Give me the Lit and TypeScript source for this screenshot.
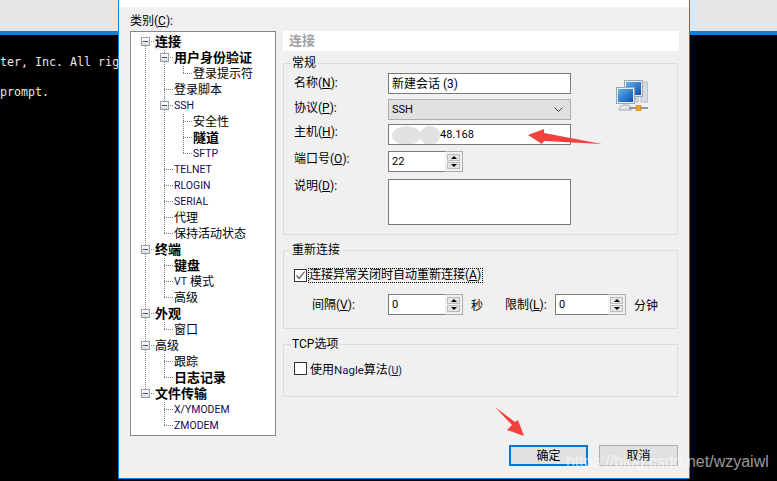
import { LitElement, html, css, svg } from "lit";
import { customElement } from "lit/decorators.js";

type Row = { t: string; lvl: number; bold?: boolean; exp?: boolean; sel?: boolean };
const rows: Row[] = [
  { t: "连接", lvl: 0, bold: true, exp: true, sel: true },
  { t: "用户身份验证", lvl: 1, bold: true, exp: true },
  { t: "登录提示符", lvl: 2 },
  { t: "登录脚本", lvl: 1 },
  { t: "SSH", lvl: 1, exp: true },
  { t: "安全性", lvl: 2 },
  { t: "隧道", lvl: 2, bold: true },
  { t: "SFTP", lvl: 2 },
  { t: "TELNET", lvl: 1 },
  { t: "RLOGIN", lvl: 1 },
  { t: "SERIAL", lvl: 1 },
  { t: "代理", lvl: 1 },
  { t: "保持活动状态", lvl: 1 },
  { t: "终端", lvl: 0, bold: true, exp: true },
  { t: "键盘", lvl: 1, bold: true },
  { t: "VT 模式", lvl: 1 },
  { t: "高级", lvl: 1 },
  { t: "外观", lvl: 0, bold: true, exp: true },
  { t: "窗口", lvl: 1 },
  { t: "高级", lvl: 0, exp: true },
  { t: "跟踪", lvl: 1 },
  { t: "日志记录", lvl: 1, bold: true },
  { t: "文件传输", lvl: 0, bold: true, exp: true },
  { t: "X/YMODEM", lvl: 1 },
  { t: "ZMODEM", lvl: 1 },
];

@customElement("app-root")
export class AppRoot extends LitElement {
  static styles = css`
    :host {
      display: block;
      position: relative;
      width: 777px;
      height: 481px;
      overflow: hidden;
      font-family: Roboto, "Noto Sans CJK SC", sans-serif;
      font-size: 12px;
      color: #000;
      background: #000;
    }
    .titlebar { height: 31px; background: #e6e6e6; }
    .rule { height: 4px; background: #0a80dc; }
    .term {
      font-family: "DejaVu Sans Mono", monospace;
      font-size: 11.65px;
      color: #e8e8e8;
      line-height: 30px;
      padding-top: 12px;
      white-space: pre;
    }
    .dialog {
      position: absolute;
      left: 118px;
      top: -1px;
      width: 572px;
      height: 480px;
      box-sizing: border-box;
      background: #f0f0f0;
      border: 1px solid #1a84d6;
      border-top: none;
      display: flex;
      flex-direction: column;
    }
    .dlg-head { height: 8px; background: #fff; flex: none; }
    .body {
      padding: 6px 11px 0 11px;
      display: grid;
      grid-template-columns: 146px 1fr;
      grid-template-rows: 18px auto;
      align-content: start;
      column-gap: 7px;
    }
    .cat-label { grid-column: 1 / 3; line-height: 16px; }
    .tree {
      height: 405px;
      box-sizing: border-box;
      border: 1px solid #828790;
      background: #fff;
      padding-top: 2px;
      overflow: hidden;
    }
    .row { height: 16px; position: relative; display: flex; align-items: center; white-space: nowrap; }
    .row .txt { line-height: 16px; padding: 0 1px; position: relative; }
    .l0 { padding-left: 23px; }
    .l1 { padding-left: 42px; }
    .l2 { padding-left: 61px; }
    .bold { font-weight: 700; font-size: 13px; }
    .sel { background: #f0f0f0; }
    .lat { font-size: 10.5px; color: #10104a; }
    .row .lat { vertical-align: 1px; }
    .nagle { font-size: 11.5px; color: #10104a; }
    .row svg.lines { position: absolute; left: 0; top: 0; }
    .box {
      position: absolute;
      width: 7px;
      height: 7px;
      top: 3px;
      border: 1px solid #9aa0a6;
      background: linear-gradient(#fff, #dcdcdc);
    }
    .box::after {
      content: "";
      position: absolute;
      left: 1px;
      right: 1px;
      top: 3px;
      height: 1px;
      background: #3a4a8a;
    }
    .right { display: flex; flex-direction: column; }
    .heading {
      height: 20px;
      background: #fff;
      color: #a0a0a0;
      font-weight: 700;
      font-size: 13px;
      line-height: 20px;
      padding-left: 6px;
      margin-right: -1px;
      box-sizing: border-box;
    }
    .group {
      border: 1px solid #dcdcdc;
      box-sizing: border-box;
      position: relative;
    }
    .legend {
      position: absolute;
      left: 7px;
      top: -9px;
      background: #f0f0f0;
      padding: 0 2px 0 1px;
      line-height: 16px;
    }
    .g1 { height: 172px; margin-top: 12px; display: flex; padding: 9px 0 0 10px; }
    .g2 { height: 79px; margin-top: 15px; padding: 16px 0 0 10px; }
    .g3 { height: 53px; margin-top: 15px; padding: 15px 0 0 10px; }
    .form { display: flex; flex-direction: column; width: 277px; }
    .frow { display: flex; align-items: flex-start; }
    .frow .lab { width: 94px; flex: none; }
    .gap4 { margin-top: 4px; }
    .gap5 { margin-top: 5px; }
    .gap6 { margin-top: 6px; }
    .gap7 { margin-top: 7px; }
    .lab { line-height: 20px; white-space: nowrap; }
    .frow .up1 { margin-top: -1px; }
    .frow .up2 { margin-top: -2px; }
    .frow .up3 { margin-top: -3px; }
    .f { height: 21px; box-sizing: border-box; border: 1px solid #7a7a7a; background: #fff; line-height: 20px; padding-left: 3px; white-space: nowrap; position: relative; }
    .w { width: 183px; }
    .combo { border-color: #adadad; background: #e1e1e1; display: flex; justify-content: space-between; align-items: center; padding-right: 7px; }
    .num { font-size: 11px; }
    .spin { display: flex; height: 21px; }
    .spin .f { border-right: none; width: 57px; }
    .spin.narrow .f { width: 53px; }
    .btns { width: 18px; height: 21px; box-sizing: border-box; border: 1px solid #adadad; border-left: none; background: #f0f0f0; display: flex; flex-direction: column; gap: 1px; padding: 2px; }
    .btns i { flex: 1; background: #e4e4e4; border: 1px solid #bdbdbd; display: flex; align-items: center; justify-content: center; }
    .tri-u { width: 0; height: 0; border: 3px solid transparent; border-top: none; border-bottom: 3px solid #000; }
    .tri-d { width: 0; height: 0; border: 3px solid transparent; border-bottom: none; border-top: 3px solid #000; }
    .host { overflow: hidden; padding-left: 51px; }
    .blot { position: absolute; top: 1px; height: 19px; border-radius: 50%; background: #e2e2e2; }
    .b1 { left: 3px; width: 29px; }
    .b2 { left: 31px; width: 20px; }
    .memo { height: 46px; }
    .icon { margin: 7px 0 0 45px; flex: none; }
    .icon svg { display: block; }
    .chk-row { display: flex; align-items: center; height: 16px; }
    .chk { width: 13px; height: 13px; box-sizing: border-box; border: 1px solid #333; background: #fff; margin-right: 1px; flex: none; }
    .chk svg { display: block; }
    .focus { outline: 1px dotted #000; outline-offset: -1px; padding: 0 1px; line-height: 15px; white-space: nowrap; width: 173px; }
    .plain { padding-left: 2px; white-space: nowrap; }
    .int-row { display: flex; align-items: center; margin-top: 11px; padding-left: 18px; height: 21px; }
    .int-row .i1 { width: 76px; }
    .int-row .i2 { width: 34px; margin-left: 8px; }
    .int-row .i3 { width: 50px; }
    .int-row .i4 { margin-left: 8px; }
    .footer {
      display: flex;
      justify-content: flex-end;
      gap: 11px;
      padding: 0 11px 12px 0;
      margin-top: auto;
    }
    .btn {
      width: 79px;
      height: 21px;
      box-sizing: border-box;
      background: #e1e1e1;
      border: 1px solid #adadad;
      text-align: center;
      line-height: 20px;
    }
    .btn.def { border: 2px solid #0078d7; line-height: 18px; }
    .arrow { position: absolute; left: 0; top: 0; pointer-events: none; }
    .wm {
      position: absolute;
      left: 566px;
      top: 453px;
      font-family: "Liberation Sans", sans-serif;
      font-size: 16px;
      line-height: 18px;
      color: rgba(255, 255, 255, 0.6);
      white-space: nowrap;
    }
  `;

  private lines(r: Row, i: number) {
    const segs: unknown[] = [];
    const xs = [14, 33, 52];
    const hasNext = (lvl: number) => {
      for (let j = i + 1; j < rows.length; j++) {
        if (rows[j].lvl < lvl) return false;
        if (rows[j].lvl === lvl) return true;
      }
      return false;
    };
    const own = xs[r.lvl];
    for (let l = 0; l <= r.lvl; l++) {
      const x = xs[l] + 0.5;
      if (l < r.lvl) {
        if (hasNext(l)) segs.push(svg`<line x1=${x} x2=${x} y1="0" y2="16" stroke="#808080" stroke-dasharray="1 1"></line>`);
      } else {
        const end = hasNext(l) ? 16 : 8;
        const start = i === 0 ? 8 : 0;
        segs.push(svg`<line x1=${x} x2=${x} y1=${start} y2=${end} stroke="#808080" stroke-dasharray="1 1"></line>`);
        segs.push(svg`<line x1=${own} x2=${own + 9} y1="7.5" y2="7.5" stroke="#808080" stroke-dasharray="1 1"></line>`);
      }
    }
    return html`<svg class="lines" width="144" height="16">${segs}</svg>`;
  }

  private label(t: string) {
    if (/^[A-Z\/]+$/.test(t)) return html`<span class="lat">${t}</span>`;
    if (t.startsWith("VT ")) return html`<span class="lat">VT</span> ${t.slice(3)}`;
    return t;
  }

  private treeRow(r: Row, i: number) {
    const xs = [10, 29, 48];
    return html`<div class="row l${r.lvl} ${r.bold ? "bold" : ""}">
      ${this.lines(r, i)}
      ${r.exp ? html`<span class="box" style="left:${xs[r.lvl]}px"></span>` : null}
      <span class="txt ${r.sel ? "sel" : ""}">${this.label(r.t)}</span>
    </div>`;
  }

  private btns() {
    return html`<div class="btns"><i><span class="tri-u"></span></i><i><span class="tri-d"></span></i></div>`;
  }

  render() {
    return html`
      <div class="titlebar"></div>
      <div class="rule"></div>
      <div class="term">ter, Inc. All rig
prompt.</div>

      <div class="dialog">
        <div class="dlg-head"></div>
        <div class="body">
          <div class="cat-label">类别(<u>C</u>):</div>
          <div class="tree">${rows.map((r, i) => this.treeRow(r, i))}</div>
          <div class="right">
            <div class="heading">连接</div>
            <div class="group g1">
              <span class="legend">常规</span>
              <div class="form">
                <div class="frow">
                  <div class="lab">名称(<u>N</u>):</div>
                  <div class="f w">新建会话 (3)</div>
                </div>
                <div class="frow gap5">
                  <div class="lab up1">协议(<u>P</u>):</div>
                  <div class="f w combo"><span class="num">SSH</span>
                    <svg width="9" height="6" viewBox="0 0 9 6"><path d="M0.5 0.5 4.5 4.5 8.5 0.5" fill="none" stroke="#444"></path></svg>
                  </div>
                </div>
                <div class="frow gap4">
                  <div class="lab up2">主机(<u>H</u>):</div>
                  <div class="f w host num">
                    <span class="blot b1"></span><span class="blot b2"></span>48.168
                  </div>
                </div>
                <div class="frow gap6">
                  <div class="lab up2">端口号(<u>O</u>):</div>
                  <div class="spin"><div class="f num">22</div>${this.btns()}</div>
                </div>
                <div class="frow gap7">
                  <div class="lab up3">说明(<u>D</u>):</div>
                  <div class="f w memo"></div>
                </div>
              </div>
              <div class="icon">
                <svg width="32" height="32" viewBox="0 0 32 32">
                  <defs>
                    <linearGradient id="scr" x1="0" y1="0" x2="1" y2="1">
                      <stop offset="0" stop-color="#5fb4ee"></stop>
                      <stop offset="1" stop-color="#0d4fb0"></stop>
                    </linearGradient>
                  </defs>
                  <rect x="25" y="2" width="6.5" height="20" fill="#d5dbe2" stroke="#aab2bb" stroke-width="0.7"></rect>
                  <rect x="8.5" y="0.5" width="18" height="16" fill="#e8edf2" stroke="#9aa6b2"></rect>
                  <rect x="10" y="2" width="15" height="13" fill="url(#scr)"></rect>
                  <rect x="17" y="17" width="6" height="6" fill="#c9d1d9"></rect>
                  <rect x="0.5" y="7.5" width="18" height="16" fill="#e8edf2" stroke="#9aa6b2"></rect>
                  <rect x="2" y="9" width="15" height="13" fill="url(#scr)"></rect>
                  <path d="M3 30c0-3 2-5 5-5h3c3 0 5 2 5 5z" fill="#e3e8ee" stroke="#a5adb6"></path>
                  <path d="M13 28h19" stroke="#8f98a2" stroke-width="2"></path>
                  <rect x="20" y="25.5" width="5" height="5" fill="#f6a21a" stroke="#c87a10" stroke-width="0.6"></rect>
                </svg>
              </div>
            </div>

            <div class="group g2">
              <span class="legend">重新连接</span>
              <div class="chk-row">
                <span class="chk">
                  <svg width="11" height="11" viewBox="0 0 11 11"><path d="M1.5 5.5 4.2 8.5 9.5 1.5" fill="none" stroke="#555" stroke-width="1.2"></path></svg>
                </span>
                <span class="focus">连接异常关闭时自动重新连接(<u>A</u>)</span>
              </div>
              <div class="int-row">
                <span class="lab i1">间隔(<u>V</u>):</span>
                <div class="spin"><div class="f num">0</div>${this.btns()}</div>
                <span class="i2">秒</span>
                <span class="lab i3">限制(<u>L</u>):</span>
                <div class="spin narrow"><div class="f num">0</div>${this.btns()}</div>
                <span class="i4">分钟</span>
              </div>
            </div>

            <div class="group g3">
              <span class="legend">TCP选项</span>
              <div class="chk-row">
                <span class="chk"></span>
                <span class="plain">使用<span class="nagle">Nagle</span>算法<span class="lat">(<u>U</u>)</span></span>
              </div>
            </div>
          </div>
        </div>
        <div class="footer">
          <div class="btn def">确定</div>
          <div class="btn">取消</div>
        </div>
      </div>

      <svg class="arrow" width="777" height="481" viewBox="0 0 777 481">
        <path d="M528 135 544 129 544 133 602 144 544 141 542 144Z" fill="#f4403c"></path>
        <path d="M495 407 515 422 518 420 524 436 507 430 512 425Z" fill="#f4403c"></path>
      </svg>
      <div class="wm">https://blog.csdn.net/wzyaiwl</div>
    `;
  }
}
